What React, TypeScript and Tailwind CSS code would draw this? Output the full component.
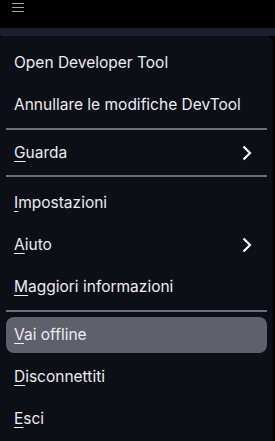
const font = { fontFamily: 'Inter, "Noto Sans", sans-serif' }

function Chevron() {
    return (
        <svg width="10" height="16" viewBox="0 0 10 16" className="text-white">
            <path d="M1.5 1.5 L8 8 L1.5 14.5" fill="none" stroke="currentColor" strokeWidth="2.2" />
        </svg>
    )
}

function Item({ label, mnemonic = false, sub = false, active = false }: { label: string; mnemonic?: boolean; sub?: boolean; active?: boolean }) {
    return (
        <div className="h-[42px] py-[3px]">
            <div className={`h-[36px] flex items-center justify-between pl-2 pr-[15px] rounded-lg ${active ? 'bg-[#5f606b]' : ''}`}>
                <span className="text-[15.5px] text-[#ececf0] leading-none">
                    {mnemonic ? (
                        <>
                            <span className="underline underline-offset-[3px] decoration-1">{label[0]}</span>
                            {label.slice(1)}
                        </>
                    ) : (
                        label
                    )}
                </span>
                {sub && <Chevron />}
            </div>
        </div>
    )
}

function Separator({ className = '' }: { className?: string }) {
    return <div className={`h-[2px] bg-[#6c6e79] ${className}`} />
}

export default function App() {
    return (
        <div className="w-[275px] h-[441px] bg-black overflow-hidden flex flex-col" style={font}>
            <div className="h-[28px] pl-3 pt-[3px] flex flex-col gap-[3px] shrink-0">
                <div className="w-3 h-px bg-[#a3a3a8]" />
                <div className="w-3 h-px bg-[#a3a3a8]" />
                <div className="w-3 h-px bg-[#a3a3a8]" />
            </div>
            <div className="h-[8px] bg-[#1c1f2e] shrink-0" />
            <div className="flex-1 mr-[2px] bg-[#0c0f16] rounded-tr-lg rounded-tl-sm px-[6px] pt-[6px]">
                <Item label="Open Developer Tool" />
                <Item label="Annullare le modifiche DevTool" />
                <Separator className="my-[2px]" />
                <Item label="Guarda" mnemonic sub />
                <Separator className="mt-[1px] mb-[5px]" />
                <Item label="Impostazioni" mnemonic />
                <Item label="Aiuto" mnemonic sub />
                <Item label="Maggiori informazioni" mnemonic />
                <Separator className="my-[2px]" />
                <Item label="Vai offline" mnemonic active />
                <Item label="Disconnettiti" mnemonic />
                <Item label="Esci" mnemonic />
            </div>
        </div>
    )
}
